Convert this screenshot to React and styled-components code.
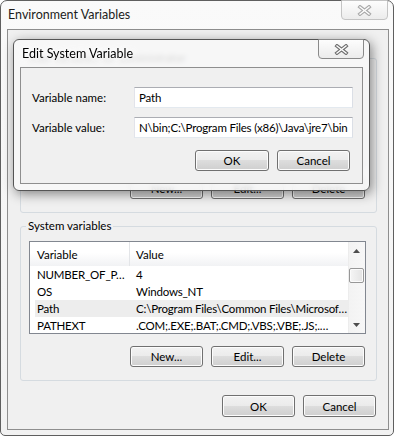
import React from 'react';
import styled, { createGlobalStyle } from 'styled-components';

const GlobalStyle = createGlobalStyle`
  html, body {
    margin: 0;
    padding: 0;
    background: #ffffff;
  }
  body {
    font-family: Lato, "Noto Sans", sans-serif;
    font-size: 11.5px;
    color: #000;
  }
  * {
    box-sizing: border-box;
  }
`;

const systemVars = [
  { name: 'NUMBER_OF_P…', value: '4' },
  { name: 'OS', value: 'Windows_NT' },
  { name: 'Path', value: 'C:\\Program Files\\Common Files\\Microsof…', selected: true },
  { name: 'PATHEXT', value: '.COM;.EXE;.BAT;.CMD;.VBS;.VBE;.JS;.…' },
];

// the visible tail of the scrolled Path value
const pathTail = 'N\\bin;C:\\Program Files (x86)\\Java\\jre7\\bin';

const CloseGlyph = ({ faded }) => (
  <svg width="15" height="11" viewBox="0 0 15 11">
    <path d="M3 2 L12 9 M12 2 L3 9" stroke={faded ? '#a9a9a9' : '#6f6f6f'} strokeWidth="3.6" strokeLinecap="square" fill="none" />
    <path d="M3 2 L12 9 M12 2 L3 9" stroke="#ffffff" strokeWidth="1.4" strokeLinecap="square" fill="none" />
  </svg>
);

const Arrow = ({ down }) => (
  <svg width="7" height="4" viewBox="0 0 7 4">
    <path d={down ? 'M0 0 H7 L3.5 4 Z' : 'M0 4 H7 L3.5 0 Z'} fill="#4d4d4d" />
  </svg>
);

const VariableList = ({ rows, height, thumbOffset }) => (
  <ListView $h={height}>
    <ListBody>
      <Header>
        <HeaderCell $first>Variable</HeaderCell>
        <HeaderCell>Value</HeaderCell>
      </Header>
      {rows.map(r => (
        <Row key={r.name} $selected={r.selected}>
          <Cell $first>{r.name}</Cell>
          <Cell>{r.value}</Cell>
        </Row>
      ))}
    </ListBody>
    <ScrollBar>
      <ScrollArrow><Arrow /></ScrollArrow>
      <ScrollTrack $offset={thumbOffset}>
        {thumbOffset !== undefined && <Thumb />}
      </ScrollTrack>
      <ScrollArrow><Arrow down /></ScrollArrow>
    </ScrollBar>
  </ListView>
);

const App = () => (
  <>
    <GlobalStyle />
    <Window>
      <TitleBar $h={28} $pad={7}>
        <Caption $inactive>Environment Variables</Caption>
        <CloseButton $inactive $w={47}><CloseGlyph faded /></CloseButton>
      </TitleBar>
      <Client>
        {/* user variables: covered by the edit dialog */}
        <Group>
          <GroupLabel>User variables for administrator</GroupLabel>
          <VariableList rows={[]} height={93} />
          <ButtonRow $top={12}>
            <Button>New...</Button>
            <Button>Edit...</Button>
            <Button>Delete</Button>
          </ButtonRow>
        </Group>
        <Group>
          <GroupLabel>System variables</GroupLabel>
          <VariableList rows={systemVars} height={93} thumbOffset={9} />
          <ButtonRow $top={12}>
            <Button>New...</Button>
            <Button>Edit...</Button>
            <Button>Delete</Button>
          </ButtonRow>
        </Group>
        <ButtonRow $top={14}>
          <Button $h={22}>OK</Button>
          <Button $h={22}>Cancel</Button>
        </ButtonRow>
      </Client>

      <Dialog>
        <TitleBar $h={27} $pad={8}>
          <Caption>Edit System Variable</Caption>
          <CloseButton $w={46}><CloseGlyph /></CloseButton>
        </TitleBar>
        <DialogClient>
          <Form>
            <FieldLabel>Variable name:</FieldLabel>
            <TextField defaultValue="Path" />
            <FieldLabel>Variable value:</FieldLabel>
            <TextField defaultValue={pathTail} />
          </Form>
          <ButtonRow $top={12} $right={12}>
            <Button $w={74}>OK</Button>
            <Button>Cancel</Button>
          </ButtonRow>
        </DialogClient>
      </Dialog>
    </Window>
  </>
);

export default App;

const Window = styled.div`
  position: relative;
  width: 394px;
  height: 436px;
  border: 1px solid #5f5f5f;
  border-radius: 7px 7px 5px 5px;
  background: linear-gradient(#fafafa, #f2f2f2);
  display: flex;
  flex-direction: column;
`;

const TitleBar = styled.div`
  height: ${p => p.$h}px;
  flex-shrink: 0;
  display: flex;
  align-items: flex-start;
  padding: 0 5px 0 ${p => p.$pad}px;
`;

const Caption = styled.div`
  font-size: 12.5px;
  line-height: ${p => (p.$inactive ? 28 : 27)}px;
  color: ${p => (p.$inactive ? '#1c1c1c' : '#000')};
  text-shadow: 0 0 6px #fff, 0 0 10px #fff;
`;

const CloseButton = styled.div`
  margin-left: auto;
  margin-top: -1px;
  width: ${p => p.$w}px;
  height: 20px;
  border: 1px solid ${p => (p.$inactive ? '#c4c4c4' : '#8a8a8a')};
  border-radius: 0 0 4px 4px;
  background: linear-gradient(#fdfdfd, #ececec);
  display: flex;
  align-items: center;
  justify-content: center;
`;

const Client = styled.div`
  flex: 1;
  margin: 0 4px 5px 6px;
  border: 1px solid #8e8e8e;
  background: #f0f0f0;
  padding: 21px 11px 0 12px;
  display: flex;
  flex-direction: column;
`;

const Group = styled.fieldset`
  margin: 0;
  padding: 8px 10px 13px 8px;
  min-width: 0;
  border: 1px solid #d5dbe0;
  border-radius: 3px;
  & + & {
    margin-top: 6px;
  }
`;

const GroupLabel = styled.legend`
  margin-left: -3px;
  padding: 0 2px;
  line-height: 14px;
`;

const ListView = styled.div`
  height: ${p => p.$h}px;
  border: 1px solid #828790;
  background: #ffffff;
  display: flex;
  overflow: hidden;
`;

const ListBody = styled.div`
  flex: 1;
  min-width: 0;
  display: flex;
  flex-direction: column;
`;

const Header = styled.div`
  height: 24px;
  flex-shrink: 0;
  display: grid;
  grid-template-columns: 100px 1fr;
  background: linear-gradient(#ffffff 0%, #ffffff 45%, #f1f2f4 100%);
`;

const HeaderCell = styled.div`
  display: flex;
  align-items: center;
  padding-left: ${p => (p.$first ? 7 : 6)}px;
  border-right: ${p => (p.$first ? '1px solid #e3e5e8' : 'none')};
`;

const Row = styled.div`
  height: 17px;
  flex-shrink: 0;
  margin-left: 5px;
  display: grid;
  grid-template-columns: 94px 1fr;
  align-items: center;
  white-space: nowrap;
  background: ${p => (p.$selected ? '#ededed' : 'transparent')};
`;

const Cell = styled.div`
  padding-left: ${p => (p.$first ? 2 : 7)}px;
  letter-spacing: -0.2px;
  overflow: hidden;
`;

const ScrollBar = styled.div`
  width: 17px;
  flex-shrink: 0;
  display: flex;
  flex-direction: column;
  background: linear-gradient(90deg, #e6e6e6 0, #f3f3f3 1px, #f7f7f7 100%);
`;

const ScrollArrow = styled.div`
  height: 17px;
  display: flex;
  align-items: center;
  justify-content: center;
`;

const ScrollTrack = styled.div`
  flex: 1;
  padding-top: ${p => p.$offset || 0}px;
`;

const Thumb = styled.div`
  height: 15px;
  margin: 0 1px;
  border: 1px solid #979797;
  border-radius: 2px;
  background: linear-gradient(90deg, #f5f5f5, #e3e3e3);
  box-shadow: inset 0 0 0 1px #fbfbfb;
`;

const ButtonRow = styled.div`
  margin-top: ${p => p.$top}px;
  padding-right: ${p => (p.$right !== undefined ? p.$right : 1)}px;
  display: flex;
  justify-content: flex-end;
  gap: 8px;
`;

const Button = styled.button`
  width: ${p => p.$w || 73}px;
  height: ${p => p.$h || 21}px;
  padding: 0;
  font: inherit;
  color: #000;
  border: 1px solid #707070;
  border-radius: 3px;
  background: linear-gradient(#f2f2f2 0%, #ebebeb 49%, #dddddd 50%, #cfcfcf 100%);
  box-shadow: inset 0 0 0 1px #fcfcfc;
`;

const Dialog = styled.div`
  position: absolute;
  left: 12px;
  top: 38px;
  width: 357px;
  height: 152px;
  border: 1px solid #555555;
  border-radius: 6px;
  background: rgba(248, 248, 248, 0.86);
  backdrop-filter: blur(2.5px);
  box-shadow: 2px 3px 12px rgba(0, 0, 0, 0.45);
  display: flex;
  flex-direction: column;
`;

const DialogClient = styled.div`
  flex: 1;
  margin: 0 6px 6px 6px;
  border: 1px solid #8e8e8e;
  background: #f0f0f0;
  padding: 19px 0 0 11px;
`;

const Form = styled.div`
  display: grid;
  grid-template-columns: 102px 219px;
  row-gap: 9px;
  align-items: center;
`;

const FieldLabel = styled.label`
  line-height: 21px;
`;

const TextField = styled.input`
  width: 100%;
  height: 21px;
  padding: 0 2px 0 4px;
  font: inherit;
  letter-spacing: -0.2px;
  color: #000;
  background: #ffffff;
  border: 1px solid;
  border-color: #abadb3 #dbdfe6 #e3e9ef #e2e3ea;
  outline: none;
`;
